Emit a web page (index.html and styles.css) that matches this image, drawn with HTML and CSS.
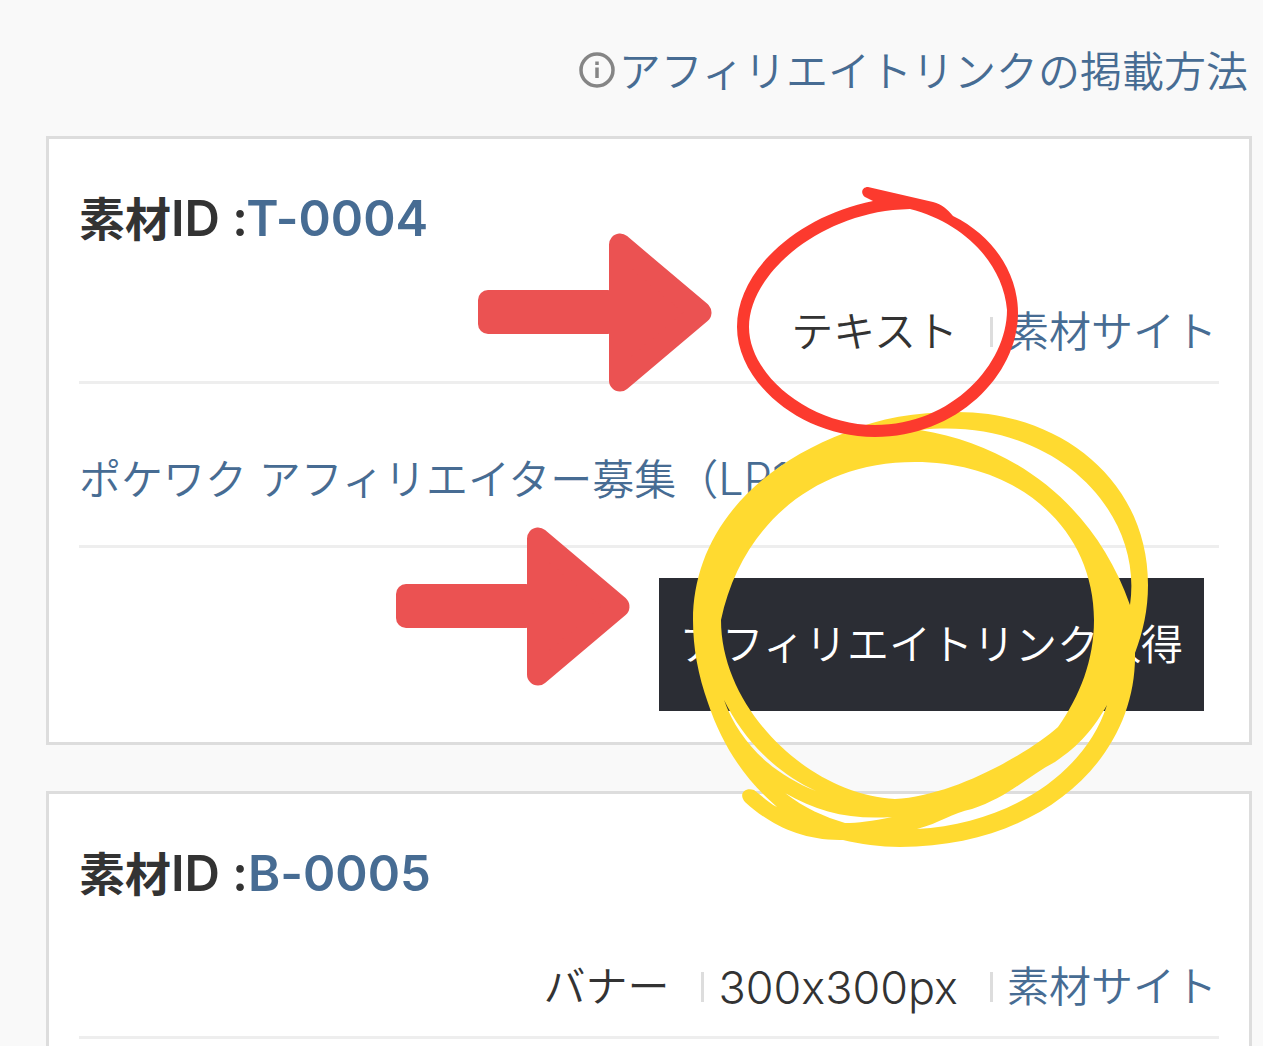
FILE: index.html
```html
<!DOCTYPE html>
<html lang="ja">
<head>
<meta charset="utf-8">
<meta name="viewport" content="width=device-width, initial-scale=1">
<title>アフィリエイト素材</title>
<link rel="stylesheet" href="styles.css">
</head>
<body>
<main class="page">
  <div class="help">
    <svg class="help-icon" viewBox="0 0 36 36" aria-hidden="true">
      <circle cx="18" cy="18" r="16" fill="none" stroke="#858585" stroke-width="3.5"/>
      <path d="M18 9.500v3.500M18 15.500v10.500" stroke="#858585" stroke-width="3.500"/>
    </svg>
    <a class="link" href="#howto">アフィリエイトリンクの掲載方法</a>
  </div>

  <article class="card">
    <h2 class="title">素材<span class="latin">ID :</span><a class="link latin" href="#t-0004">T-0004</a></h2>
    <ul class="meta">
      <li>テキスト</li>
      <li><a class="link" href="#site-1">素材サイト</a></li>
    </ul>
    <p class="name"><a class="link" href="#lp">ポケワク アフィリエイター募集（<span class="latin">LP1</span>）</a></p>
    <div class="actions"><button class="get" type="button">アフィリエイトリンク取得</button></div>

    <svg class="marks" viewBox="380 180 780 680" aria-hidden="true">
      <g fill="#eb5252" stroke="#eb5252" stroke-linejoin="round">
        <rect x="478" y="290" width="140" height="44" rx="10" stroke="none"/>
        <path d="M620 244.500V380.500L700.500 312.500Z" stroke-width="22"/>
        <rect x="396" y="584" width="140" height="44" rx="10" stroke="none"/>
        <path d="M538 538.500V674.500L618.500 606.500Z" stroke-width="22"/>
      </g>
      <path fill="#ffda30" fill-rule="evenodd" d="M957 412C1060 412 1148 480 1148 585C1148 610 1143 632 1135 653C1137 760 1040 847 900 847C880 847 860 844 843 840C800 841 768 823 745 802C738 794 745 787 754 790C762 796 769 803 777 807C745 780 722 745 708 703C698 675 693 648 693 620C693 545 741 472 847 432C880 418 915 412 957 412Z
        M915 462C1020 462 1094 530 1094 620C1094 660 1080 696 1058 727C1030 752 955 796 895 799C810 795 721 710 721 620C740 530 810 462 915 462Z
        M920 430C1050 416 1144 508 1130 605C1096 508 1018 446 920 430Z
        M1107 705C1084 776 1006 824 917 829C940 823 952 813 972 809C1009 797 1029 775 1055 762C1080 745 1094 728 1107 705Z
        M724 700C742 737 774 772 816 791C772 774 739 742 724 700Z
        M785 793C818 812 850 820 892 817C872 821 858 823 845 823C825 817 804 808 785 793Z"/>
      <path fill="#fc3a2e" fill-rule="evenodd" d="M868 187L933 202C942 204 948 210 953 216C994 236 1018 274 1018 313C1018 376 956 437 875 437C800 437 737 382 737 327C737 270 798 216 873 201L865 197C860 193 862 187 868 187Z
        M893 210C812 219 749 277 749 327C749 376 811 425 875 425C952 425 1007 364 1007 310C1003 262 962 222 910 209Z"/>
    </svg>
  </article>

  <article class="card">
    <h2 class="title">素材<span class="latin">ID :</span><a class="link latin" href="#b-0005">B-0005</a></h2>
    <ul class="meta">
      <li>バナー</li>
      <li class="latin">300x300px</li>
      <li><a class="link" href="#site-2">素材サイト</a></li>
    </ul>
  </article>
</main>
</body>
</html>
```

FILE: styles.css
```css
* { box-sizing: border-box; }

body {
  margin: 0;
  background: #f9f9f9;
  color: #333;
  font-family: Inter, "Noto Sans CJK JP", sans-serif;
  font-feature-settings: "calt" 0;
  font-size: 42px;
  font-weight: 350;
  line-height: 64px;
}

.page {
  display: flex;
  flex-direction: column;
  gap: 46px;
  padding: 40px 11px 0 46px;
}

.link {
  color: #476c93;
  text-decoration: none;
}

.latin {
  font-size: 45px;
  line-height: 1;
}

.help {
  display: flex;
  justify-content: flex-end;
  align-items: center;
  gap: 4px;
  margin-bottom: -14px;
  padding-right: 4px;
}

.help-icon {
  width: 36px;
  height: 36px;
  margin-bottom: 4px;
}

.card {
  position: relative;
  padding: 48px 30px 31px;
  border: 3px solid #ddd;
  background: #fff;
}

.title {
  margin: 0;
  font-size: 46px;
  font-weight: 700;
}

.title .latin {
  font-size: 49px;
  font-weight: 600;
}

.meta {
  display: flex;
  justify-content: flex-end;
  margin: 0;
  padding: 49px 2px 17px 0;
  border-bottom: 3px solid #eee;
  list-style: none;
}

.meta li {
  display: flex;
  align-items: center;
}

.meta li + li::before {
  content: "";
  width: 3px;
  height: 30px;
  margin: 0 14px 0 32px;
  background: #ddd;
}

.name {
  margin: 0;
  padding: 64px 0 33px;
  border-bottom: 3px solid #eee;
}

.actions {
  display: flex;
  justify-content: flex-end;
  padding: 30px 15px 0;
}

.get {
  padding: 35px 21px 34px;
  border: 0;
  background: #2b2d34;
  color: #fff;
  font: inherit;
}

/* Hand-drawn marks lie over this card and reach into the next one */
.marks {
  position: absolute;
  z-index: 1;
  top: 41px;
  right: 89px;
  width: 780px;
  height: 680px;
  pointer-events: none;
}
```
